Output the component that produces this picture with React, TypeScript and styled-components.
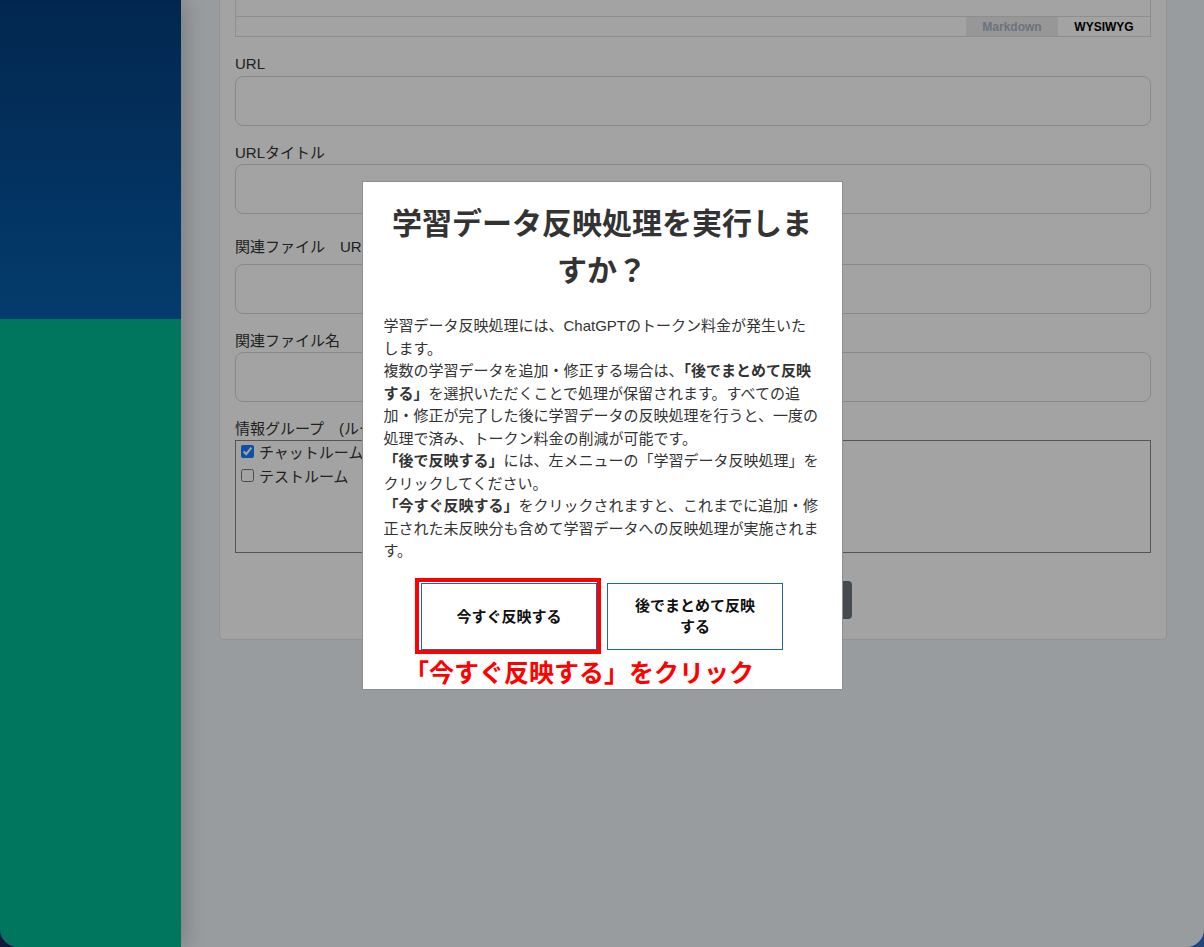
import React from 'react'
import styled, { createGlobalStyle } from 'styled-components'

const GlobalStyle = createGlobalStyle`
  html, body {
    margin: 0;
    padding: 0;
  }
  body {
    width: 1204px;
    height: 947px;
    overflow: hidden;
    background: linear-gradient(90deg, #121a3a 0%, #1c2f5c 60%, #24457a 100%);
    font-family: "Liberation Sans", "Noto Sans CJK JP", sans-serif;
  }
`

const Frame = styled.div`
  position: relative;
  display: flex;
  width: 1204px;
  height: 947px;
  overflow: hidden;
  border-radius: 0 0 18px 18px;
`

const Sidebar = styled.aside`
  flex: 0 0 181px;
  display: flex;
  flex-direction: column;
  z-index: 1;
  box-shadow: 2px 0 22px rgba(0, 0, 0, 0.22);
`

const SidebarHead = styled.div`
  height: 319px;
  background: linear-gradient(180deg, #043d7c 0%, #075eab 100%);
`

const SidebarBody = styled.div`
  flex: 1;
  background: #00b994;
`

const Main = styled.main`
  flex: 1;
  background: #eff4f8;
  padding: 0 37px 0 38px;
  overflow: hidden;
`

const Card = styled.section`
  margin-top: -100px;
  background: #fff;
  border: 1px solid #e4e4e4;
  border-radius: 5px;
  padding: 15px 15px 20px;
`

const Editor = styled.div`
  border: 1px solid #dedede;
`

const EditorBody = styled.div`
  height: 99px;
  border-bottom: 1px solid #dedede;
`

const ModeBar = styled.div`
  display: flex;
  justify-content: flex-end;
  height: 19px;
`

const ModeTab = styled.div<{ $active?: boolean }>`
  width: 92px;
  display: flex;
  align-items: center;
  justify-content: center;
  font-size: 12px;
  font-weight: 700;
  color: ${p => (p.$active ? '#000' : '#a9b3c8')};
  background: ${p => (p.$active ? '#fff' : '#ececec')};
`

const Field = styled.div<{ $first?: boolean }>`
  margin-top: ${p => (p.$first ? 14 : 13)}px;
`

const Label = styled.label<{ $tall?: boolean }>`
  display: flex;
  align-items: center;
  height: ${p => (p.$tall ? 36 : 24)}px;
  font-size: 15px;
  color: #333;
`

const TextInput = styled.input`
  display: block;
  box-sizing: border-box;
  width: 100%;
  height: 50px;
  margin: 1px 0 0;
  border: 1px solid #d6d6d6;
  border-radius: 8px;
  background: #fff;
`

const RoomList = styled.div`
  box-sizing: border-box;
  height: 113px;
  margin-top: 1px;
  border: 1px solid #858585;
  padding: 0 5px;
  display: flex;
  flex-direction: column;
  gap: 4px;
`

const RoomItem = styled.label`
  display: flex;
  align-items: center;
  gap: 5px;
  height: 20px;
  font-size: 15px;
  color: #333;

  input {
    width: 13px;
    height: 13px;
    margin: 0;
    accent-color: #1a7dff;
  }
`

const SubmitRow = styled.div`
  display: flex;
  justify-content: center;
  margin-top: 28px;
`

const SubmitButton = styled.button`
  width: 318px;
  height: 38px;
  border: none;
  border-radius: 4px;
  background: #6c757d;
  color: #fff;
  font-size: 16px;
  font-family: inherit;
`

const Backdrop = styled.div`
  position: absolute;
  inset: 0;
  z-index: 10;
  background: rgba(0, 0, 0, 0.36);
  display: flex;
  justify-content: center;
  align-items: flex-start;
  padding-top: 181px;
`

const Dialog = styled.div`
  position: relative;
  box-sizing: border-box;
  width: 481px;
  background: #fff;
  border: 1px solid #8e8e8e;
  padding: 18px 21px 39px 21px;
  color: #333;
`

const Title = styled.h2`
  margin: 0 0 21px;
  font-size: 30px;
  font-weight: 700;
  line-height: 47px;
  text-align: center;
  color: #333;
`

const Message = styled.p`
  margin: 0;
  font-size: 15px;
  line-height: 22.5px;

  b {
    font-weight: 700;
  }
`

const ButtonRow = styled.div`
  display: flex;
  justify-content: center;
  gap: 10px;
  margin-top: 20px;
`

const ButtonSlot = styled.div`
  position: relative;
`

const ChoiceButton = styled.button`
  box-sizing: border-box;
  width: 176px;
  height: 67px;
  padding: 0 22px;
  border: 1px solid #1f64b0;
  background: #fff;
  color: #111;
  font-family: inherit;
  font-size: 15px;
  font-weight: 700;
  line-height: 21px;
`

const Highlight = styled.span`
  position: absolute;
  inset: -5px -4px -4px -6px;
  border: 4px solid #ff0000;
  pointer-events: none;
`

const Callout = styled.span`
  position: absolute;
  left: -17px;
  top: calc(100% + 11px);
  white-space: nowrap;
  font-size: 25px;
  font-weight: 700;
  line-height: 1;
  color: #ff0000;
  text-shadow:
    2px 0 0 #fff, -2px 0 0 #fff, 0 2px 0 #fff, 0 -2px 0 #fff,
    2px 2px 0 #fff, -2px -2px 0 #fff, 2px -2px 0 #fff, -2px 2px 0 #fff,
    3px 0 1px #fff, -3px 0 1px #fff, 0 3px 1px #fff, 0 -3px 1px #fff;
`

export default function App() {
  return (
    <>
      <GlobalStyle />
      <Frame>
        <Sidebar>
          <SidebarHead />
          <SidebarBody />
        </Sidebar>

        <Main>
          <Card>
            <Editor>
              <EditorBody />
              <ModeBar>
                <ModeTab>Markdown</ModeTab>
                <ModeTab $active>WYSIWYG</ModeTab>
              </ModeBar>
            </Editor>

            <Field $first>
              <Label>URL</Label>
              <TextInput />
            </Field>
            <Field>
              <Label>URLタイトル</Label>
              <TextInput />
            </Field>
            <Field>
              <Label $tall>関連ファイル　URL</Label>
              <TextInput />
            </Field>
            <Field>
              <Label>関連ファイル名</Label>
              <TextInput />
            </Field>
            <Field>
              <Label>情報グループ　(ルーム選択)</Label>
              <RoomList>
                <RoomItem>
                  <input type="checkbox" defaultChecked />
                  チャットルーム
                </RoomItem>
                <RoomItem>
                  <input type="checkbox" />
                  テストルーム
                </RoomItem>
              </RoomList>
            </Field>

            <SubmitRow>
              <SubmitButton>登録する</SubmitButton>
            </SubmitRow>
          </Card>
        </Main>

        <Backdrop>
          <Dialog>
            <Title>学習データ反映処理を実行しますか？</Title>
            <Message>
              学習データ反映処理には、ChatGPTのトークン料金が発生いたします。
              <br />
              複数の学習データを追加・修正する場合は、<b>「後でまとめて反映する」</b>
              を選択いただくことで処理が保留されます。すべての追加・修正が完了した後に学習データの反映処理を行うと、一度の処理で済み、トークン料金の削減が可能です。
              <br />
              <b>「後で反映する」</b>には、左メニューの「学習データ反映処理」をクリックしてください。
              <br />
              <b>「今すぐ反映する」</b>
              をクリックされますと、これまでに追加・修正された未反映分も含めて学習データへの反映処理が実施されます。
            </Message>
            <ButtonRow>
              <ButtonSlot>
                <ChoiceButton>今すぐ反映する</ChoiceButton>
                <Highlight />
                <Callout>「今すぐ反映する」をクリック</Callout>
              </ButtonSlot>
              <ButtonSlot>
                <ChoiceButton>後でまとめて反映する</ChoiceButton>
              </ButtonSlot>
            </ButtonRow>
          </Dialog>
        </Backdrop>
      </Frame>
    </>
  )
}
